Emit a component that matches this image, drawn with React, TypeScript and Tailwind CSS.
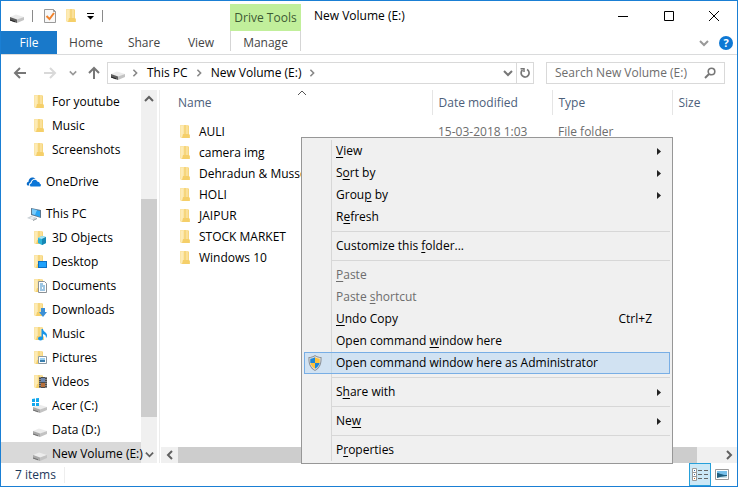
import React from 'react';
import clsx from 'clsx';

type OverlayKind = 'cube' | 'desktop' | 'document' | 'download' | 'music' | 'picture' | 'video';

const FolderIcon: React.FC<{ overlay?: OverlayKind }> = ({ overlay }) => (
  <svg width="16" height="16" viewBox="0 0 16 16" className="shrink-0" aria-hidden="true">
    <path d="M2 1h8l1 1v8l1 1v3H4l-2-1z" fill="#f6d67c" />
    <path d="M2 1h4v13H4l-2-1z" fill="#fbe5a6" />
    <path d="M3 2h2v11H3z" fill="#fdebb5" />
    <path d="M8 1h2v9H8z" fill="#fae09a" />
    <path d="M5 10h6v4H4z" fill="#f5cf69" />
    {overlay === 'cube' && (
      <g>
        <path d="M6 8l4-2 4 1v6l-4 2-4-2z" fill="#2cb3d9" />
        <path d="M6 8l4-2 4 1-4 2z" fill="#a9e4f3" />
        <path d="M10 9l4-2v6l-4 2z" fill="#1787b5" />
      </g>
    )}
    {overlay === 'desktop' && (
      <g>
        <path d="M6 7h9v7H6z" fill="#0b6fc4" />
        <path d="M7 8h7v5H7z" fill="#1ea1fb" />
      </g>
    )}
    {overlay === 'document' && (
      <g>
        <path d="M6.500 3.500h6l2 2v9h-8z" fill="#fff" stroke="#8b9196" />
        <path d="M8 6h3M8 8h5M8 10h2M11 10h2M8 12h5" stroke="#3a8cc7" />
      </g>
    )}
    {overlay === 'download' && <path d="M9 6h4v4h2l-4 5-4-5h2z" fill="#3b8fd6" />}
    {overlay === 'music' && (
      <g>
        <ellipse cx="8.500" cy="12.500" rx="2.500" ry="2" fill="#1a96e8" />
        <path d="M9.500 3H11c0 3 4 3 4 6.500 0 1-.5 2-1 2.500.3-3-1.500-3.500-3-4v5H9.500z" fill="#1a96e8" />
      </g>
    )}
    {overlay === 'picture' && (
      <g>
        <path d="M6.500 6.500h8v7h-8z" fill="#fff" stroke="#8b9aa5" />
        <path d="M8 8h5v2H8z" fill="#9bd0f2" />
        <path d="M8 10h5v2H8z" fill="#3a7fae" />
      </g>
    )}
    {overlay === 'video' && (
      <g>
        <path d="M7 3h8v11H7z" fill="#4b4b4b" />
        <path d="M9 4h4v4H9z" fill="#6d87b0" />
        <path d="M9 9h4v4H9z" fill="#b56f3b" />
        <path d="M8 3v11M14 3v11" stroke="#c5c5c5" strokeDasharray="1 1" />
      </g>
    )}
  </svg>
);

const DriveIcon: React.FC<{ system?: boolean; dark?: boolean }> = ({ system, dark }) => (
  <svg width="16" height="16" viewBox="0 0 16 16" className="shrink-0" aria-hidden="true">
    <path d="M1 9l6-2.500 8 2.500-7 3z" fill="#ececec" />
    <path d="M1 9l7 2.500V15l-7-2.500z" fill={dark ? '#5e5e5e' : '#a9a9a9'} />
    <path d="M8 11.500L15 9v3l-7 3z" fill="#c3c3c3" />
    <path d="M1 11.500l5 1.700v1L1 12.500z" fill={dark ? '#222' : '#6e6e6e'} />
    {system && (
      <g fill="#13a8ee">
        <path d="M0 1l3-.5V4H0zM4 .3L7 0v4H4zM0 5h3v3H0zM4 5h3v3H4z" />
      </g>
    )}
  </svg>
);

const OneDriveIcon = () => (
  <svg width="16" height="16" viewBox="0 0 16 16" className="shrink-0" aria-hidden="true">
    <path d="M1.500 11.500C.2 10.500.5 8 2.500 7.700 2.500 4 6.500 2 9.500 5 6.500 5 5 7 5 8.500c-1.700.3-2 2-1.500 3z" fill="#0a6cc9" />
    <path d="M4.500 12.500c-1.300-1-.7-3 1-3.200C5.700 5.500 10 4.700 11.500 7.700c1.700-.2 2.400 1 2.300 2 1.700.4 1.500 2.800-.3 2.800z" fill="#0a76d8" />
    <path d="M3.700 11.500c-.5-1.500.3-2.600 1.400-2.900.3-2.600 3-4.200 5.300-3" fill="none" stroke="#fff" strokeWidth=".8" />
  </svg>
);

const ComputerIcon = () => (
  <svg width="16" height="16" viewBox="0 0 16 16" className="shrink-0" aria-hidden="true">
    <path d="M5 2l10 2v8L5 9z" fill="#5c7890" />
    <path d="M6 3l8 2v6L6 8z" fill="#25a4f4" />
    <path d="M6 3l5 1-2 5-3-1z" fill="#7bcbfa" />
    <path d="M1 12l4-2 6 2-4 2z" fill="#c4ccd2" />
    <path d="M3 12l3-1 3 1-3 1z" fill="#eef1f3" />
    <path d="M7 14l4-2v1l-4 2z" fill="#8f979d" />
  </svg>
);

const ShieldIcon = () => (
  <svg width="16" height="16" viewBox="0 0 16 16" className="shrink-0" aria-hidden="true">
    <path d="M8 0c2 1.500 4 2 6.500 2C15 8 13.500 13 8 16 2.500 13 1 8 1.500 2 4 2 6 1.500 8 0z" fill="#8d9297" />
    <path d="M8 1.200c2 1.200 3.500 1.600 5.500 1.700C13.700 8 12.500 12 8 14.900 3.500 12 2.300 8 2.500 2.900 4.500 2.800 6 2.400 8 1.200z" fill="#e5e7e8" />
    <path d="M8 2.300V8H3.300C3.200 6.500 3.200 5 3.300 3.800 5 3.600 6.500 3.200 8 2.300z" fill="#1b86d8" />
    <path d="M8 2.300V8h4.700c.1-1.500.1-3 0-4.200C11 3.600 9.500 3.200 8 2.300z" fill="#fbc23b" />
    <path d="M8 8v5.800C5.200 12 3.800 10.200 3.300 8z" fill="#fbc23b" />
    <path d="M8 8v5.800c2.800-1.800 4.200-3.600 4.700-5.800z" fill="#1b86d8" />
  </svg>
);

const Chevron: React.FC<{ dir: 'up' | 'down' | 'left' | 'right'; className?: string; thin?: boolean }> = ({ dir, className, thin }) => {
  const paths = {
    up: 'M1 7l4-4 4 4',
    down: 'M1 3l4 4 4-4',
    left: 'M7 1L3 5l4 4',
    right: 'M3 1l4 4-4 4',
  };
  return (
    <svg width="10" height="10" viewBox="0 0 10 10" className={clsx('shrink-0', className)} aria-hidden="true">
      <path d={paths[dir]} fill="none" stroke="currentColor" strokeWidth={thin ? 1 : 2} />
    </svg>
  );
};

const NavArrow: React.FC<{ dir: 'left' | 'right' | 'up' }> = ({ dir }) => {
  const paths = {
    left: 'M13 7H2M7 2L2 7l5 5',
    right: 'M1 7h11M7 2l5 5-5 5',
    up: 'M7 13V2M2 7l5-5 5 5',
  };
  return (
    <svg width="14" height="14" viewBox="0 0 14 14" aria-hidden="true">
      <path d={paths[dir]} fill="none" stroke="currentColor" strokeWidth="2" />
    </svg>
  );
};

const TitleBar = () => (
  <div className="flex h-[30px] shrink-0 items-center">
    <div className="flex w-[229px] shrink-0 items-center pl-2">
      <DriveIcon dark />
      <span className="ml-[7px] h-3 w-px bg-[#8a8a8a]" />
      <button type="button" aria-label="Properties" className="ml-[9px]">
        <svg width="16" height="16" viewBox="0 0 16 16" aria-hidden="true">
          <path d="M2.500 1.500h9l2 2v11h-11z" fill="#f8f8f8" stroke="#9a9a9a" />
          <path d="M11.500 1.500v2h2" fill="none" stroke="#9a9a9a" />
          <path d="M4.500 8l3 3 4.500-6" fill="none" stroke="#f0822c" strokeWidth="2" />
        </svg>
      </button>
      <button type="button" aria-label="New folder" className="ml-[6px]">
        <FolderIcon />
      </button>
      <button type="button" aria-label="Customize Quick Access Toolbar" className="ml-[7px]">
        <svg width="8" height="8" viewBox="0 0 8 8" aria-hidden="true">
          <path d="M0 1h7v1H0zM0 4h7L3.500 7.500z" fill="#000" />
        </svg>
      </button>
      <span className="ml-[7px] h-3 w-px bg-[#8a8a8a]" />
    </div>
    <div className="flex h-[27px] w-[71px] shrink-0 items-center justify-center self-end bg-[#c1ef9b] text-[#3d5a34]">Drive Tools</div>
    <h1 className="ml-[13px] flex-1">New Volume (E:)</h1>
    <div className="flex">
      <button type="button" aria-label="Minimize" className="flex h-[28px] w-[46px] items-center justify-center">
        <svg width="10" height="10" viewBox="0 0 10 10"><path d="M0 5h10v1H0z" /></svg>
      </button>
      <button type="button" aria-label="Maximize" className="flex h-[28px] w-[45px] items-center justify-center">
        <svg width="10" height="10" viewBox="0 0 10 10"><path d="M.5.5h9v9h-9z" fill="none" stroke="#000" /></svg>
      </button>
      <button type="button" aria-label="Close" className="flex h-[28px] w-[46px] items-center justify-center">
        <svg width="10" height="10" viewBox="0 0 10 10"><path d="M0 0l10 10M10 0L0 10" stroke="#000" /></svg>
      </button>
    </div>
  </div>
);

const RibbonTabs = () => (
  <div className="flex h-6 shrink-0 items-center border-b border-[#dadbdc] text-[#444]">
    <button type="button" className="h-full w-14 bg-[#1979ca] text-white">File</button>
    <button type="button" className="w-[58px]">Home</button>
    <button type="button" className="w-[58px]">Share</button>
    <button type="button" className="w-[57px] pr-px">View</button>
    <button type="button" className="h-5 w-[71px] self-start border-x border-[#d5d5d5] pt-1">Manage</button>
    <div className="flex-1" />
    <button type="button" aria-label="Expand the Ribbon" className="mr-[10px] text-[#999]">
      <Chevron dir="down" />
    </button>
    <button type="button" aria-label="Help" className="mr-1 flex size-[14px] items-center justify-center rounded-full bg-[#0e78d4] text-[11px] font-bold text-white">?</button>
  </div>
);

const AddressRow = () => (
  <div className="flex h-9 shrink-0 items-center pb-px">
    <div className="flex w-[106px] shrink-0 items-center pl-3">
      <button type="button" aria-label="Back" className="text-[#777]"><NavArrow dir="left" /></button>
      <button type="button" aria-label="Forward" className="ml-4 text-[#d9d9d9]"><NavArrow dir="right" /></button>
      <button type="button" aria-label="Recent locations" className="ml-3 text-[#999]"><Chevron dir="down" className="size-[8px]" /></button>
      <button type="button" aria-label="Up" className="ml-[10px] text-[#777]"><NavArrow dir="up" /></button>
    </div>
    <div className="flex h-[22px] min-w-0 flex-1 items-center border border-[#d9d9d9]">
      <div className="flex flex-1 items-center pl-[2px]">
        <DriveIcon dark />
        <Chevron dir="right" className="ml-[5px] size-[8px] text-[#888]" />
        <button type="button" className="ml-2">This PC</button>
        <Chevron dir="right" className="ml-[7px] size-[8px] text-[#888]" />
        <button type="button" className="ml-2">New Volume (E:)</button>
        <Chevron dir="right" className="ml-[7px] size-[8px] text-[#888]" />
      </div>
      <button type="button" aria-label="Previous locations" className="px-[3px] text-[#777]"><Chevron dir="down" /></button>
      <button type="button" aria-label="Refresh" className="flex h-full w-[17px] items-center justify-center border-l border-[#d9d9d9] text-[#777]">
        <svg width="12" height="12" viewBox="0 0 12 12" aria-hidden="true">
          <path d="M8 2.500A4 4 0 1 1 3.500 3" fill="none" stroke="currentColor" strokeWidth="1.700" />
          <path d="M1.500 1.700H5V5" fill="none" stroke="currentColor" strokeWidth="1.500" />
        </svg>
      </button>
    </div>
    <label className="mr-3 ml-3 flex h-[22px] w-[179px] shrink-0 items-center border border-[#d9d9d9] pl-2">
      <input type="text" aria-label="Search" placeholder="Search New Volume (E:)" className="w-0 flex-1 outline-none placeholder:text-[#6d6d6d]" />
      <svg width="12" height="12" viewBox="0 0 12 12" className="mr-[8px] shrink-0" aria-hidden="true">
        <circle cx="7.500" cy="4.500" r="3.300" fill="none" stroke="#777" strokeWidth="1.600" />
        <path d="M5 7l-4 4" stroke="#777" strokeWidth="2" />
      </svg>
    </label>
  </div>
);

interface TreeRowProps {
  label: string;
  icon: React.ReactNode;
  root?: boolean;
  selected?: boolean;
}

const TreeRow: React.FC<TreeRowProps> = ({ label, icon, root, selected }) => (
  <button
    type="button"
    className={clsx(
      'flex h-6 w-full shrink-0 items-center whitespace-nowrap',
      root ? 'gap-1 pl-[25px]' : 'gap-1 pl-[31px]',
      selected && 'bg-[#d9d9d9]'
    )}
  >
    {icon}
    <span>{label}</span>
  </button>
);

const thisPcFolders: { label: string; overlay: OverlayKind }[] = [
  { label: '3D Objects', overlay: 'cube' },
  { label: 'Desktop', overlay: 'desktop' },
  { label: 'Documents', overlay: 'document' },
  { label: 'Downloads', overlay: 'download' },
  { label: 'Music', overlay: 'music' },
  { label: 'Pictures', overlay: 'picture' },
  { label: 'Videos', overlay: 'video' },
];

const NavigationPane = () => (
  <nav className="flex w-[159px] shrink-0 border-r border-[#ececec]">
    {/* long labels may run a little over the edge of the scroll bar */}
    <div className="relative z-10 flex h-full min-w-0 flex-1 flex-col gap-2 overflow-x-visible overflow-y-clip">
      <div>
        <TreeRow label="For youtube" icon={<FolderIcon />} />
        <TreeRow label="Music" icon={<FolderIcon />} />
        <TreeRow label="Screenshots" icon={<FolderIcon />} />
      </div>
      <TreeRow label="OneDrive" icon={<OneDriveIcon />} root />
      <div>
        <TreeRow label="This PC" icon={<ComputerIcon />} root />
        {thisPcFolders.map((f) => (
          <TreeRow key={f.label} label={f.label} icon={<FolderIcon overlay={f.overlay} />} />
        ))}
        <TreeRow label="Acer (C:)" icon={<DriveIcon system />} />
        <TreeRow label="Data (D:)" icon={<DriveIcon />} />
        <TreeRow label="New Volume (E:)" icon={<DriveIcon />} selected />
      </div>
    </div>
    <div className="mr-[2px] flex w-4 flex-col items-center bg-[#f0f0f0] text-[#606060]">
      <button type="button" aria-label="Scroll up" className="flex h-[17px] items-center"><Chevron dir="up" /></button>
      <div className="flex-[92]" />
      <div className="w-full flex-[218] bg-[#cdcdcd]" />
      <div className="flex-[29]" />
      <button type="button" aria-label="Scroll down" className="flex h-[17px] items-center"><Chevron dir="down" className="size-[9px]" /></button>
    </div>
  </nav>
);

const files = [
  { name: 'AULI', date: '15-03-2018 1:03', type: 'File folder' },
  { name: 'camera img' },
  { name: 'Dehradun & Musso' },
  { name: 'HOLI' },
  { name: 'JAIPUR' },
  { name: 'STOCK MARKET' },
  { name: 'Windows 10' },
];

const FileList = () => (
  <div className="flex min-w-0 flex-1 flex-col">
    <div className="min-h-0 flex-1 overflow-hidden">
      <table className="w-full table-fixed border-collapse whitespace-nowrap">
        <colgroup>
          <col className="w-[272px]" />
          <col className="w-[120px]" />
          <col className="w-[120px]" />
          <col />
        </colgroup>
        <thead>
          <tr className="h-[25px] text-left text-[#4c607a]">
            <th className="relative border-r border-[#e5e5e5] p-0 pl-[18px] font-normal">
              Name
              <Chevron dir="up" thin className="absolute top-[-2px] left-[137px] text-[#555]" />
            </th>
            <th className="border-r border-[#e5e5e5] p-0 pl-[6px] font-normal">Date modified</th>
            <th className="border-r border-[#e5e5e5] p-0 pl-[6px] font-normal">Type</th>
            <th className="p-0 pl-[6px] font-normal">Size</th>
          </tr>
        </thead>
        <tbody className="before:block before:h-[6px]">
          {files.map((file) => (
            <tr key={file.name} className="h-[21px]">
              <td className="p-0 pl-[18px]">
                <div className="flex items-center gap-[5px]">
                  <FolderIcon />
                  {file.name}
                </div>
              </td>
              <td className="p-0 pl-[6px] text-[#6d6d6d]">{file.date}</td>
              <td className="p-0 pl-[6px] text-[#6d6d6d]">{file.type}</td>
              <td />
            </tr>
          ))}
        </tbody>
      </table>
    </div>
    <div className="ml-px flex h-4 shrink-0 items-center bg-[#f0f0f0] text-[#606060]">
      <button type="button" aria-label="Scroll left" className="flex w-[17px] justify-center"><Chevron dir="left" /></button>
      <div className="h-full flex-[519] bg-[#cdcdcd]" />
      <div className="flex-[23]" />
      <button type="button" aria-label="Scroll right" className="flex w-[17px] justify-center"><Chevron dir="right" /></button>
    </div>
  </div>
);

const StatusBar = () => (
  <div className="flex h-[23px] shrink-0 items-center pl-[14px] text-[#1e395b]">
    <span className="border-r border-[#eee] pr-2">7 items</span>
    <div className="flex-1" />
    <button type="button" aria-label="Details view" className="flex h-full w-[22px] items-center justify-center border border-[#26a0da] bg-[#cce8f6]">
      <svg width="16" height="14" viewBox="0 0 16 14" aria-hidden="true">
        <path d="M.5.5h4v12h-4zM.5 4.500h4M.5 8.500h4" fill="#fff" stroke="#999" />
        <path d="M2 2h1v1H2zM2 6h1v1H2z" fill="#3a6ea5" />
        <path d="M2 10h1v1H2z" fill="#c8641e" />
        <path d="M6 2.500h4M12 2.500h4M6 6.500h4M12 6.500h4M6 10.500h4M12 10.500h4" stroke="#666" />
      </svg>
    </button>
    <button type="button" aria-label="Large icons view" className="mr-2 ml-1">
      <svg width="14" height="12" viewBox="0 0 14 12" aria-hidden="true">
        <path d="M.5.5h13v10H.5z" fill="#fff" stroke="#999" />
        <path d="M2 2h10v7H2z" fill="#76bfe9" />
        <path d="M2 4c3 0 4 2 10 2v3H2z" fill="#1f5f80" />
        <path d="M5 8l7-1v2H2z" fill="#c9dfe6" />
      </svg>
    </button>
  </div>
);

interface MenuEntry {
  // "&" stands before the access key
  label: string;
  shortcut?: string;
  submenu?: boolean;
  disabled?: boolean;
  highlighted?: boolean;
}

const menuGroups: MenuEntry[][] = [
  [
    { label: '&View', submenu: true },
    { label: 'S&ort by', submenu: true },
    { label: 'Grou&p by', submenu: true },
    { label: 'R&efresh' },
  ],
  [{ label: 'Customize this &folder...' }],
  [
    { label: '&Paste', disabled: true },
    { label: 'Paste &shortcut', disabled: true },
    { label: '&Undo Copy', shortcut: 'Ctrl+Z' },
    { label: 'Open command &window here' },
    { label: 'Open command window here as Administrator', highlighted: true },
  ],
  [{ label: 'S&hare with', submenu: true }],
  [{ label: 'Ne&w', submenu: true }],
  [{ label: 'P&roperties' }],
];

const AccessLabel: React.FC<{ text: string }> = ({ text }) => {
  const at = text.indexOf('&');
  if (at < 0) return <span>{text}</span>;
  return (
    <span>
      {text.slice(0, at)}
      <span className="underline underline-offset-2">{text[at + 1]}</span>
      {text.slice(at + 2)}
    </span>
  );
};

const ContextMenu = () => (
  <div role="menu" className="absolute top-[136px] left-[300px] z-20 w-[372px] border border-[#979797] bg-[#f0f0f0] p-[2px]">
    {menuGroups.map((group, i) => (
      <div key={i}>
        {i > 0 && (
          <div className="ml-[27px] flex h-[7px] items-center border-l border-[#d7d7d7]">
            <div className="h-px w-full bg-[#d7d7d7]" />
          </div>
        )}
        {group.map((item) => (
          <button
            key={item.label}
            type="button"
            role="menuitem"
            disabled={item.disabled}
            className={clsx(
              'flex h-[22px] w-full items-center text-left',
              item.disabled && 'text-[#6d6d6d]',
              item.highlighted && 'bg-[#d1e2f2] outline outline-[#78aee5] -outline-offset-1'
            )}
          >
            <span className="flex w-[27px] shrink-0 items-center pl-[3px]">{item.highlighted && <ShieldIcon />}</span>
            <span className={clsx('flex h-full flex-1 items-center border-l pl-1', item.highlighted ? 'border-[#c2d6e3]' : 'border-[#d7d7d7]')}>
              <AccessLabel text={item.label} />
            </span>
            {item.shortcut && <span className="pr-[18px]">{item.shortcut}</span>}
            {item.submenu && (
              <svg width="4" height="7" viewBox="0 0 4 7" className="mr-[9px]" aria-hidden="true">
                <path d="M0 0l4 3.500L0 7z" fill="#222" />
              </svg>
            )}
          </button>
        ))}
      </div>
    ))}
  </div>
);

const App: React.FC = () => (
  <div className="relative flex h-screen w-full flex-col overflow-hidden border border-[#1a7fd4] bg-white font-['Open_Sans','Noto_Sans',sans-serif] text-[12px] leading-4 text-black">
    <TitleBar />
    <RibbonTabs />
    <AddressRow />
    <div className="-mt-px flex min-h-0 flex-1">
      <NavigationPane />
      <FileList />
    </div>
    <StatusBar />
    <ContextMenu />
  </div>
);

export default App;
